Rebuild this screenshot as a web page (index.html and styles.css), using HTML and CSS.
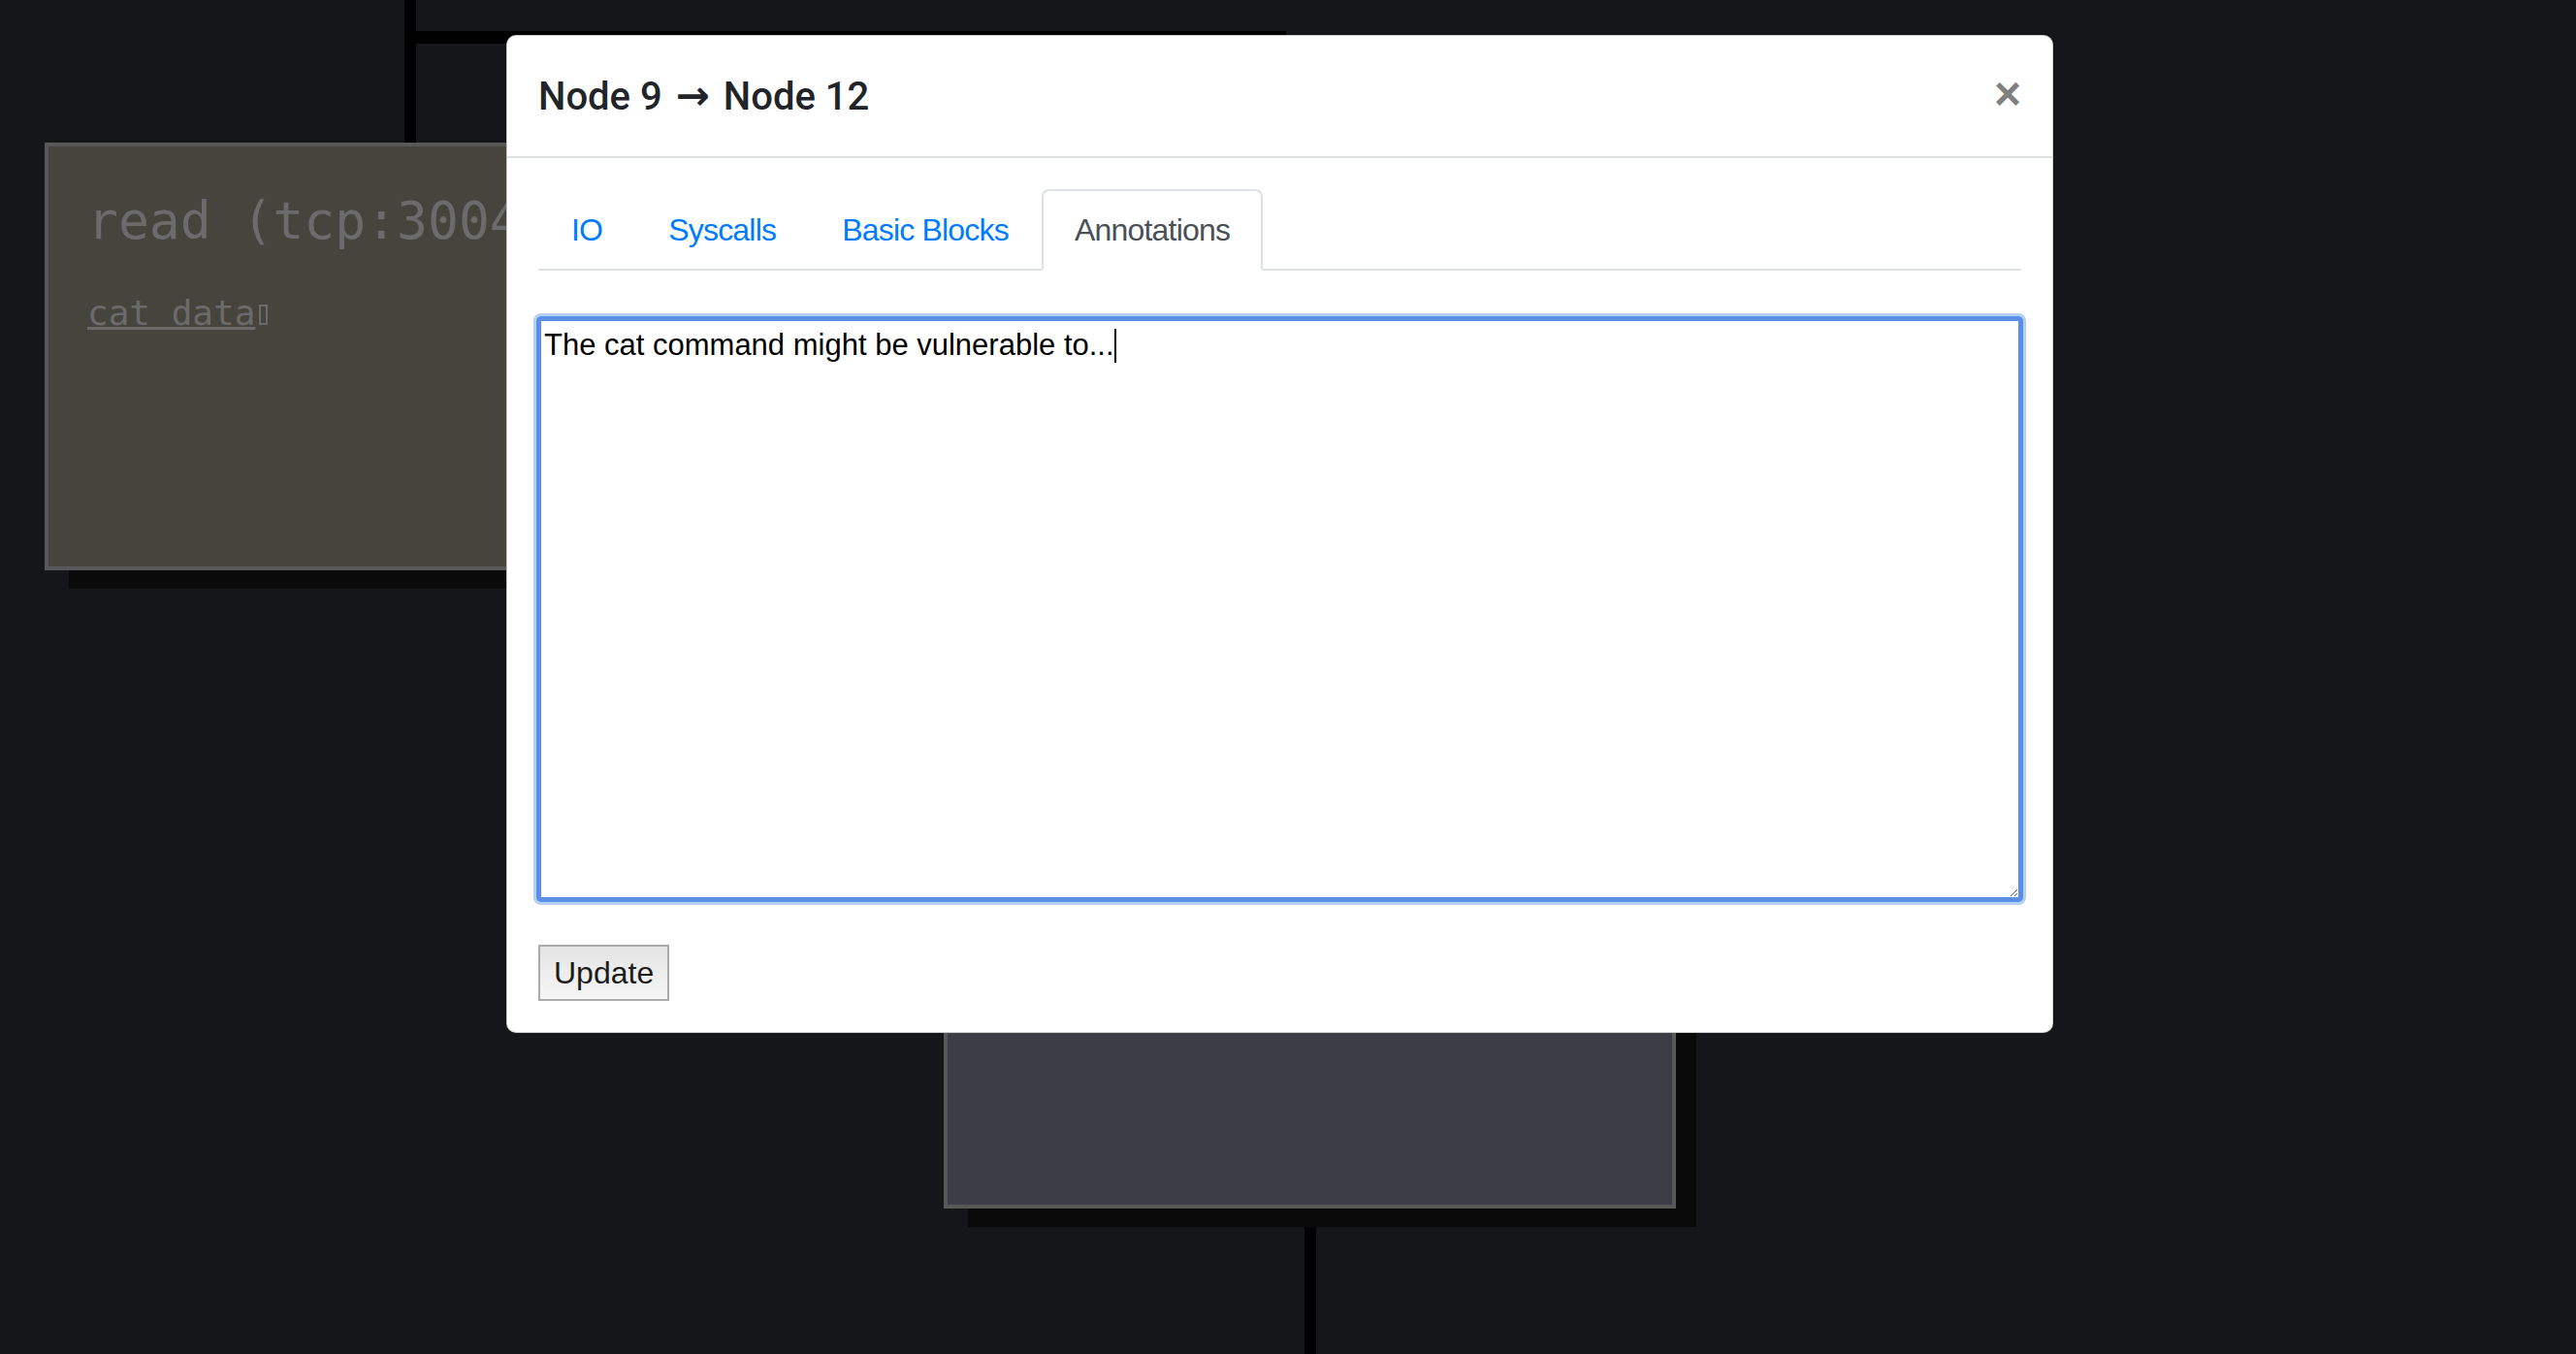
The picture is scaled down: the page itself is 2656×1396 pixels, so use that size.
FILE: index.html
```html
<!DOCTYPE html>
<html lang="en">
<head>
<meta charset="utf-8">
<title>Node 9 → Node 12</title>
<link rel="stylesheet" href="styles.css">
</head>
<body>
<div class="canvas">
  <div class="edge edge-v1"></div>
  <div class="edge edge-h1"></div>
  <div class="edge edge-v2"></div>
  <div class="edge edge-v3"></div>
  <div class="node node-read">
    <div class="node-title">read (tcp:3004)</div>
    <div class="node-sub"><a href="#" class="node-link">cat data</a><span class="tofu"></span></div>
  </div>
  <div class="node node-cat"></div>
</div>

<div class="modal">
  <div class="modal-header">
    <h5 class="modal-title">Node 9 <span class="arrow">→</span> Node 12</h5>
    <button class="close" type="button">×</button>
  </div>
  <div class="modal-body">
    <ul class="nav-tabs">
      <li><a href="#" class="nav-link">IO</a></li>
      <li><a href="#" class="nav-link">Syscalls</a></li>
      <li><a href="#" class="nav-link">Basic Blocks</a></li>
      <li><a href="#" class="nav-link active">Annotations</a></li>
    </ul>
    <div class="tab-pane">
      <div class="editor">
        <textarea class="notes">The cat command might be vulnerable to...</textarea>
        <span class="caret"></span>
      </div>
      <button class="update" type="button">Update</button>
    </div>
  </div>
</div>
</body>
</html>
```

FILE: styles.css
```css
html, body {
  margin: 0;
  padding: 0;
}
body {
  position: relative;
  width: 2656px;
  height: 1396px;
  overflow: hidden;
  background: #151619;
  font-family: "Liberation Sans", Arial, sans-serif;
}

/* graph canvas */
.canvas {
  position: absolute;
  left: 0;
  top: 0;
  width: 2656px;
  height: 1396px;
}
.edge {
  position: absolute;
  background: #000;
}
.edge-v1 { left: 417px; top: 0; width: 12px; height: 160px; }
.edge-h1 { left: 417px; top: 32px; width: 909px; height: 13px; }
.edge-v2 { left: 1314px; top: 32px; width: 12px; height: 900px; }
.edge-v3 { left: 1345px; top: 1100px; width: 12px; height: 296px; }

.node {
  position: absolute;
  box-sizing: border-box;
  border: 4px solid #585858;
  box-shadow: 23px 21px 0 -2px #0a0a0a;
}
.node-read {
  left: 46px;
  top: 147px;
  width: 1000px;
  height: 441px;
  background: #45443d;
  padding: 45px 40px;
  font-family: "DejaVu Sans Mono", monospace;
  color: #6b6b6b;
}
.node-title {
  font-size: 53px;
  line-height: 64px;
  white-space: nowrap;
}
.node-sub {
  margin-top: 42px;
  font-size: 36px;
  line-height: normal;
}
.node-link {
  color: #6b6b6b;
  text-decoration: underline;
}
.tofu {
  display: inline-block;
  box-sizing: border-box;
  width: 9px;
  height: 21px;
  margin-left: 4px;
  border: 2px solid #6b6b6b;
}
.node-cat {
  left: 973px;
  top: 800px;
  width: 755px;
  height: 446px;
  background: #3d3d46;
}

/* modal */
.modal {
  position: absolute;
  left: 522px;
  top: 36px;
  width: 1595px;
  box-sizing: border-box;
  background: #fff;
  border: 1px solid rgba(0, 0, 0, 0.2);
  border-radius: 10px;
  color: #212529;
}
.modal-header {
  display: flex;
  align-items: flex-start;
  justify-content: space-between;
  padding: 32px 32px 31px;
  border-bottom: 2px solid #dee2e6;
}
.modal-title {
  margin: 0;
  font-family: Roboto, "Liberation Sans", sans-serif;
  font-weight: 500;
  font-size: 40px;
  line-height: 60px;
}
.arrow {
  margin: 0 4px;
  font-family: "DejaVu Sans", sans-serif;
  font-weight: 700;
  font-size: 42px;
}
.close {
  margin: -32px -32px -32px auto;
  padding: 36px 32px 28px;
  border: 0;
  background: none;
  font-family: "Liberation Sans", Arial, sans-serif;
  font-weight: 700;
  font-size: 48px;
  line-height: 1;
  color: #808080;
  cursor: pointer;
}
.modal-body {
  padding: 32px;
}
.nav-tabs {
  display: flex;
  list-style: none;
  margin: 0;
  padding: 0;
  border-bottom: 2px solid #dee2e6;
}
.nav-link {
  display: block;
  margin-bottom: -2px;
  padding: 16px 32px;
  border: 2px solid transparent;
  border-top-left-radius: 8px;
  border-top-right-radius: 8px;
  color: #007bff;
  text-decoration: none;
  font-size: 32px;
  line-height: 48px;
  letter-spacing: -0.8px;
}
.nav-link.active {
  color: #495057;
  background: #fff;
  border-color: #dee2e6 #dee2e6 #fff;
}
.tab-pane {
  display: flex;
  flex-direction: column;
  align-items: flex-start;
  gap: 46px;
  padding-top: 49px;
}
.editor {
  position: relative;
  width: 100%;
  line-height: 0;
}
.notes {
  box-sizing: border-box;
  width: 100%;
  height: 600px;
  margin: 0;
  padding: 7px 3px;
  border: 3px solid #5a8fe6;
  border-radius: 3px;
  box-shadow: 0 0 0 2px #5a8fe6, 0 0 0 5px #b4d0f7;
  outline: none;
  font-family: "Liberation Sans", Arial, sans-serif;
  font-size: 31px;
  line-height: normal;
  color: #000;
  background: #fff;
  vertical-align: top;
}
.caret {
  position: absolute;
  left: 594px;
  top: 11px;
  width: 2px;
  height: 35px;
  background: #000;
}
.update {
  box-sizing: border-box;
  height: 58px;
  padding: 0 14px;
  border: 2px solid #ababab;
  border-radius: 0;
  background: linear-gradient(#e4e4e4, #f6f6f6);
  font-family: "Liberation Sans", Arial, sans-serif;
  font-size: 32px;
  color: #1c1c1c;
}
```
